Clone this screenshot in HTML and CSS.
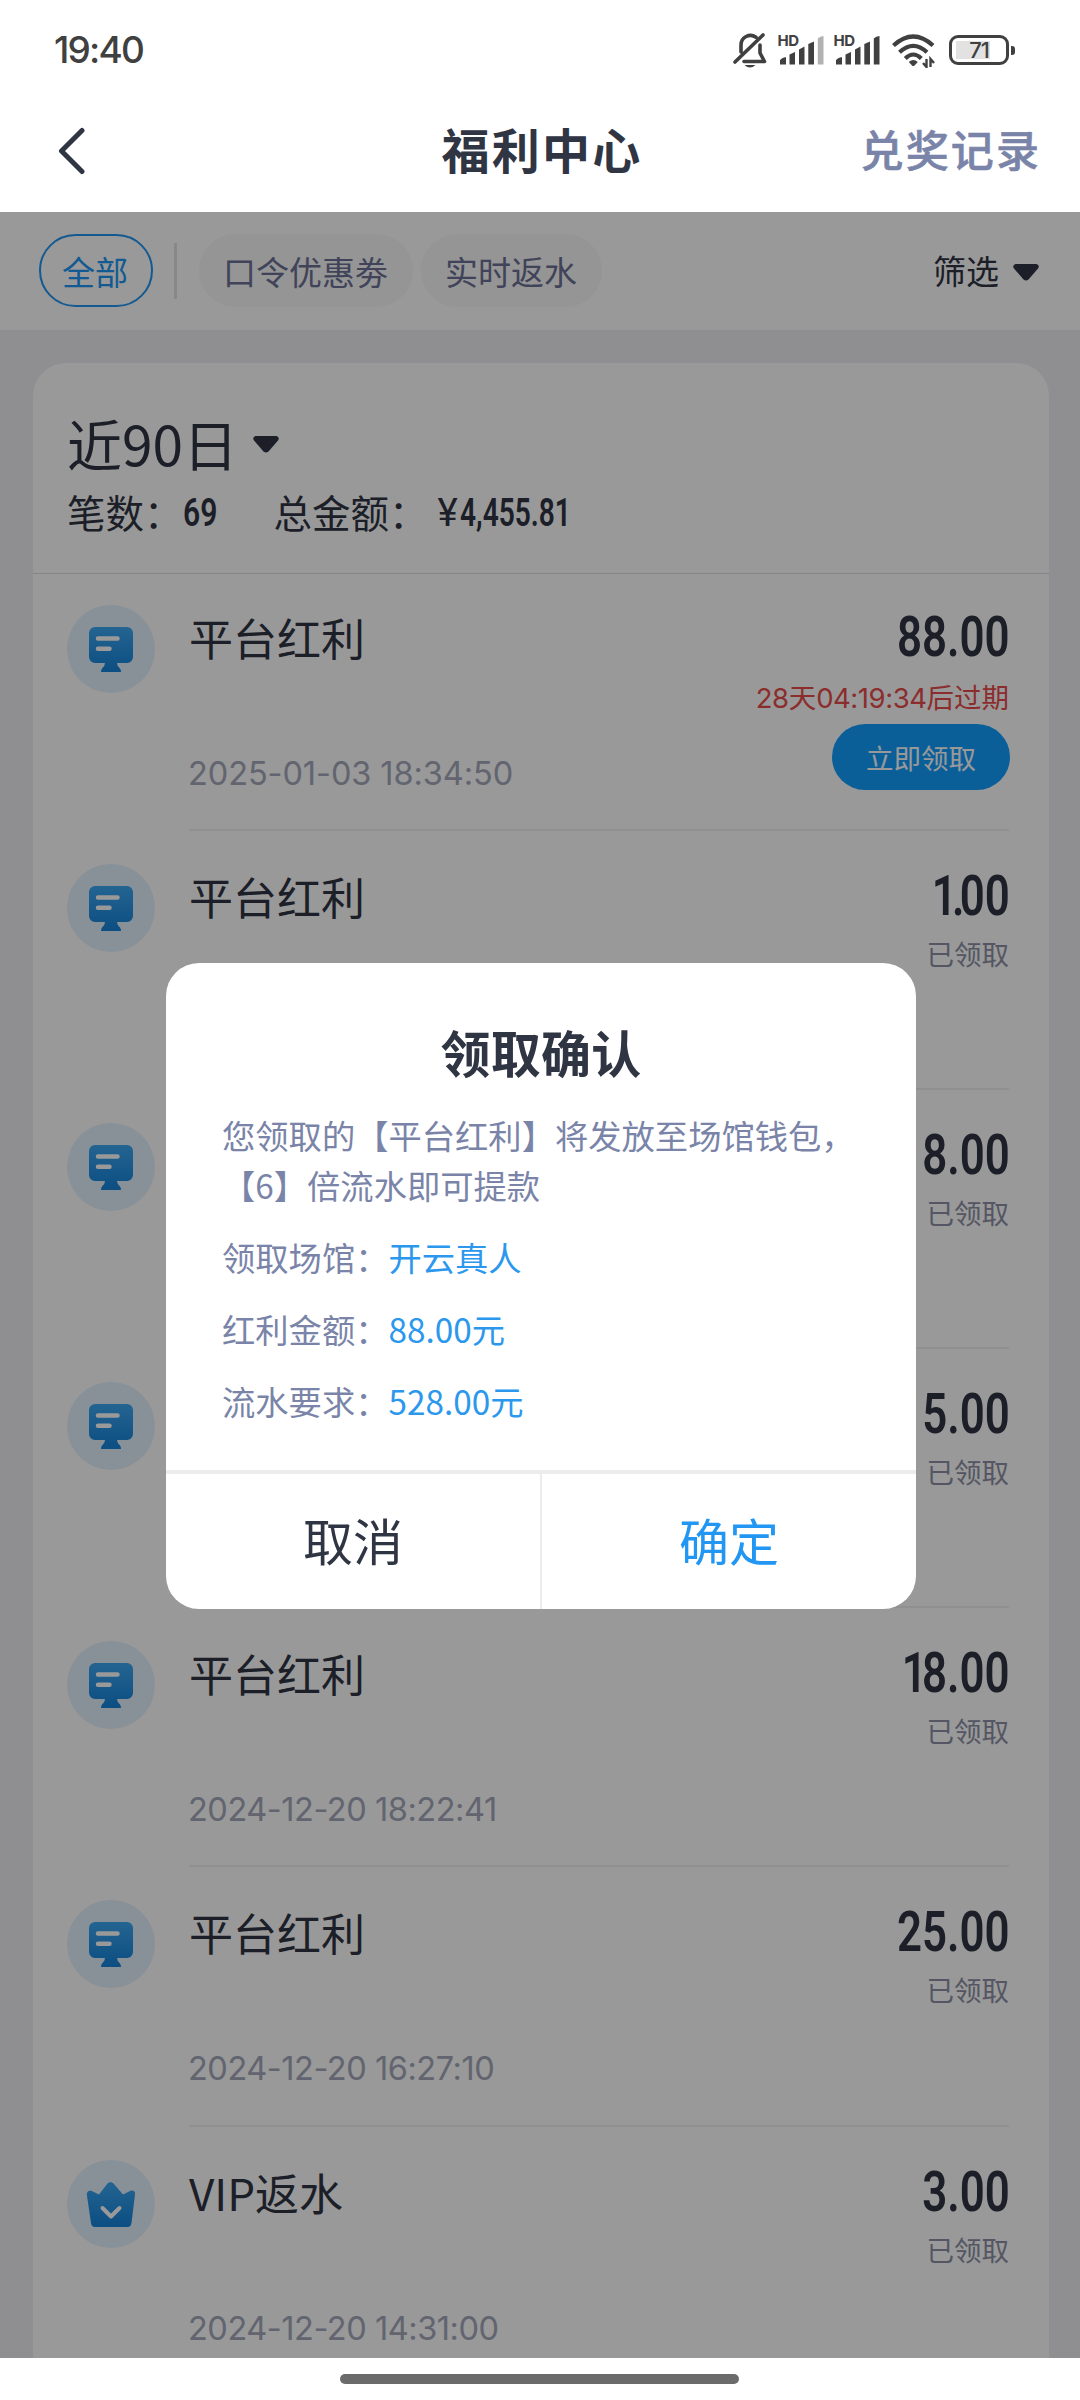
FILE: index.html
```html
<!DOCTYPE html>
<html lang="zh-CN">
<head>
<meta charset="utf-8">
<title>福利中心</title>
<link rel="stylesheet" href="styles.css">
</head>
<body>
<svg class="defs" width="0" height="0" aria-hidden="true">
  <defs>
    <linearGradient id="blue" x1="0" y1="0" x2="0" y2="1">
      <stop offset="0" stop-color="#3ba7f2"/>
      <stop offset="1" stop-color="#1682da"/>
    </linearGradient>
    <symbol id="monitor" viewBox="0 0 88 88">
      <path fill="url(#blue)" d="M28 22H60a6 6 0 0 1 6 6V52a6 6 0 0 1-6 6H50q0 3 3 5.500q1 1 1 3.500H34q0-2.500 1-3.500q3-2.500 3-5.500H28a6 6 0 0 1-6-6V28a6 6 0 0 1 6-6z"/>
      <path stroke="#fff" stroke-width="4.500" stroke-linecap="round" d="M31 33.500H50.500M31 43.700H42.500"/>
    </symbol>
    <symbol id="crown" viewBox="0 0 88 88">
      <path fill="url(#blue)" d="M40.500 23.500q3-3 6 0L56 34.500L63.500 30.800q5-1 4.500 3.700L64.500 63q-.6 4-4 4H28q-3.500 0-4-4L19.800 34.500q0-4.500 4.500-3.700L32 34.500z"/>
      <path fill="none" stroke="#fff" stroke-width="4" stroke-linecap="round" stroke-linejoin="round" d="M35.500 48l8.500 8.500l8.500-8.500"/>
    </symbol>
    <symbol id="caret" viewBox="0 0 26 17">
      <path d="M2.500 0H23.500Q27 1.500 25 4.500L15.500 15.500Q13 17.500 10.500 15.500L1 4.500Q-1 1.500 2.500 0z"/>
    </symbol>
  </defs>
</svg>
<div class="screen">
  <div class="status">
    <span class="clock">19:40</span>
    <div class="status-icons">
      <svg class="bell" viewBox="0 0 34 36" fill="none" stroke="#404040" stroke-width="3.600" stroke-linecap="round" stroke-linejoin="round">
        <path d="M8 20V13A9.500 9.500 0 0 1 23 5.200M27 13V21L31.500 29.500H11M30 3L2 30"/>
        <path stroke="none" fill="#404040" d="M11.500 33H22.500Q17 38 11.500 33z"/>
      </svg>
      <svg class="signal" viewBox="0 0 46 32">
        <text x="-.5" y="12">HD</text>
        <path d="M2 30.500V26Q4 23.500 8 23V30.500zM11.500 30.500V20.500L17 18V30.500zM21 30.500V15.500L26.500 12.500V30.500zM30.300 30.500V10L36 7.500V30.500z"/>
        <path class="faint" d="M39.800 30.500V4.500Q42 2 45.500 2V30.500z"/>
      </svg>
      <svg class="signal second" viewBox="0 0 46 32">
        <text x="-.5" y="12">HD</text>
        <path d="M2 30.500V26Q4 23.500 8 23V30.500zM11.500 30.500V20.500L17 18V30.500zM21 30.500V15.500L26.500 12.500V30.500zM30.300 30.500V10L36 7.500V30.500zM39.800 30.500V4.500Q42 2 45.500 2V30.500z"/>
      </svg>
      <svg class="wifi" viewBox="0 0 43 34" fill="none" stroke="#404040" stroke-width="4.200">
        <path d="M1.500 11.500Q21.300-6.500 41 11.500M7.500 18.300Q21.300 5.500 35 18.300M13.300 24.500Q21.300 16.500 29.300 24.500"/>
        <path fill="#404040" stroke="none" d="M16.800 28Q21.300 24 25.800 28L22.500 31.500Q21.300 32.500 20 31.500z"/>
        <path stroke-width="2.400" d="M34.500 25V33L31 29M38.500 33V25L42 29"/>
      </svg>
      <div class="battery"><span>71</span></div>
    </div>
  </div>
  <header class="navbar">
    <svg class="back" viewBox="0 0 28 50"><path d="M24 4.500L3.500 25L24 45.500"/></svg>
    <h1>福利中心</h1>
    <a class="records">兑奖记录</a>
  </header>
  <main>
    <nav class="filters">
      <span class="chip active">全部</span>
      <i class="sep"></i>
      <span class="chip">口令优惠劵</span>
      <span class="chip">实时返水</span>
      <span class="filter">筛选<svg class="caret"><use href="#caret"/></svg></span>
    </nav>
    <section class="card">
      <div class="summary">
        <div class="period">近90日<svg class="caret"><use href="#caret"/></svg></div>
        <div class="totals">
          <span class="count">笔数：</span><b class="din n1">69</b>
          <span class="total">总金额：</span><span class="yen">¥</span><b class="din n2">4,455.81</b>
        </div>
      </div>
      <ul class="list">
        <li>
          <svg class="badge"><use href="#monitor"/></svg>
          <div class="body">
            <div class="info"><h2>平台红利</h2><time>2025-01-03 18:34:50</time></div>
            <div class="side"><b class="din amount">88.00</b><span class="expire"><i>28</i>天<i>04:19:34</i>后过期</span><span class="claim">立即领取</span></div>
          </div>
        </li>
        <li>
          <svg class="badge"><use href="#monitor"/></svg>
          <div class="body">
            <div class="info"><h2>平台红利</h2></div>
            <div class="side"><b class="din amount lead-one">1.00</b><span class="state">已领取</span></div>
          </div>
        </li>
        <li>
          <svg class="badge"><use href="#monitor"/></svg>
          <div class="body">
            <div class="info"></div>
            <div class="side"><b class="din amount">8.00</b><span class="state">已领取</span></div>
          </div>
        </li>
        <li>
          <svg class="badge"><use href="#monitor"/></svg>
          <div class="body">
            <div class="info"></div>
            <div class="side"><b class="din amount">5.00</b><span class="state">已领取</span></div>
          </div>
        </li>
        <li>
          <svg class="badge"><use href="#monitor"/></svg>
          <div class="body">
            <div class="info"><h2>平台红利</h2><time>2024-12-20 18:22:41</time></div>
            <div class="side"><b class="din amount lead-one">18.00</b><span class="state">已领取</span></div>
          </div>
        </li>
        <li>
          <svg class="badge"><use href="#monitor"/></svg>
          <div class="body">
            <div class="info"><h2>平台红利</h2><time>2024-12-20 16:27:10</time></div>
            <div class="side"><b class="din amount">25.00</b><span class="state">已领取</span></div>
          </div>
        </li>
        <li>
          <svg class="badge"><use href="#crown"/></svg>
          <div class="body">
            <div class="info"><h2>VIP返水</h2><time>2024-12-20 14:31:00</time></div>
            <div class="side"><b class="din amount">3.00</b><span class="state">已领取</span></div>
          </div>
        </li>
      </ul>
    </section>
    <div class="overlay">
      <div class="dialog">
        <div class="dialog-body">
          <h3>领取确认</h3>
          <p>您领取的【平台红利】将发放至场馆钱包，<br>【6】倍流水即可提款</p>
          <dl>
            <div><dt>领取场馆：</dt><dd>开云真人</dd></div>
            <div><dt>红利金额：</dt><dd>88.00元</dd></div>
            <div><dt>流水要求：</dt><dd>528.00元</dd></div>
          </dl>
        </div>
        <div class="actions"><span class="cancel">取消</span><span class="ok">确定</span></div>
      </div>
    </div>
  </main>
  <footer class="home"><i></i></footer>
</div>
</body>
</html>
```
FILE: styles.css
```css
* { box-sizing: border-box; margin: 0; padding: 0; }
body {
  width: 1080px;
  height: 2400px;
  overflow: hidden;
  background: #fff;
  font-family: "Noto Sans CJK SC", sans-serif;
  color: #303543;
}
i { font-style: normal; }
.defs { display: block; position: absolute; }
.screen { display: flex; flex-direction: column; height: 2400px; }

/* Status bar */
.status {
  display: flex;
  justify-content: space-between;
  height: 98px;
  padding: 0 71px 0 54px;
}
.clock { font: 500 37px/98px Inter, sans-serif; color: #404040; letter-spacing: -1.800px; padding-top: 1px; }
.status-icons { display: flex; align-items: flex-start; padding-top: 32px; }
.bell { width: 34px; height: 36px; margin-right: 11px; }
.signal { width: 46px; height: 32px; margin: 2px 10px 0 0; fill: #404040; overflow: visible; }
.signal.second { margin-right: 12px; }
.signal text { font: 700 15px Inter, sans-serif; letter-spacing: -.5px; }
.signal .faint { fill: #b2b2b2; }
.wifi { width: 43px; height: 34px; margin: 2px 14px 0 0; }
.battery {
  position: relative;
  width: 60px;
  height: 30px;
  margin-top: 3px;
  border: 3px solid #404040;
  border-radius: 9px;
  background: linear-gradient(#e2e2e2, #e2e2e2) 4px 3px / 34px 18px no-repeat;
  font: 500 22px/24px Inter, sans-serif;
  text-align: center;
  color: #404040;
}
.battery span { letter-spacing: -1px; }
.battery::after {
  content: "";
  position: absolute;
  right: -9px;
  top: 8px;
  width: 4px;
  height: 9px;
  border-radius: 0 3px 3px 0;
  background: #404040;
}

/* Navigation bar */
.navbar {
  display: grid;
  grid-template-columns: 300px 1fr 300px;
  align-items: start;
  height: 114px;
  padding: 0 39px 0 58px;
}
.back { width: 28px; height: 50px; margin-top: 28px; fill: none; stroke: #303543; stroke-width: 5; stroke-linecap: round; stroke-linejoin: round; }
h1 { font-size: 48px; line-height: 100px; font-weight: 700; letter-spacing: 2.300px; text-align: center; padding-right: 15px; }
.records { font-size: 43px; line-height: 100px; font-weight: 500; letter-spacing: 2.100px; text-align: right; color: #7a84a8; -webkit-text-stroke: .600px #7a84a8; }

main { position: relative; height: 2146px; overflow: hidden; background: #eeeff4; }

/* Filters */
.filters {
  display: flex;
  align-items: center;
  height: 118px;
  padding: 0 41px 1px 39px;
  background: #fff;
  font-size: 33px;
  line-height: 75px;
}
.chip { height: 73px; padding: 0 25px 0 24px; border-radius: 37px; background: #f8f8f8; color: #6b7194; margin-right: 8px; }
.chip.active { padding: 0 23px 0 21px; border: 2px solid #2196f3; background: none; color: #2196f3; line-height: 71px; margin-right: 21px; }
.sep { width: 3px; height: 56px; margin-right: 22px; background: #e3e3ea; }
.filter { display: flex; align-items: center; margin-left: auto; }
.caret { width: 26px; height: 17px; fill: #303543; margin: 3px 0 0 14px; }

/* Card */
.card { margin: 33px 31px 0 33px; border-radius: 33px 33px 0 0; background: #fff; }
.summary { height: 211px; padding: 40px 34px 0; border-bottom: 1px solid #dcdce4; color: #303543; }
.period { display: flex; align-items: center; height: 78px; font-size: 55px; line-height: 77px; }
.period .caret { margin: 4px 0 0 15px; }
.totals { display: flex; height: 60px; font-size: 38.500px; line-height: 60px; }
.din { display: block; font-family: Roboto, sans-serif; font-weight: 600; transform: scaleX(.78); transform-origin: 0 50%; }
.totals .din, .yen { padding-top: 2px; }
.n1 { width: 91px; }
.n2 { transform: scaleX(.73); }
.yen { font-family: Roboto, sans-serif; width: 22px; margin-left: 10px; }

/* Rows */
.list { list-style: none; margin-top: -2px; }
.list li { display: flex; height: 259.100px; padding: 0 40px 0 34px; }
.badge { flex: none; width: 88px; height: 88px; margin: 33px 34px 0 0; border-radius: 50%; background: #e4f2fe; }
.body { flex: 1; display: flex; justify-content: space-between; border-bottom: 2px solid #f0f0f3; }
.info { display: flex; flex-direction: column; }
h2 { font-size: 44px; line-height: 64px; font-weight: 400; margin: 33px 0 0; }
time { font: 400 32.500px/40px Inter, sans-serif; color: #a4a8ba; margin: 85px 0 0 -1px; letter-spacing: -.450px; }
li:first-child time { letter-spacing: -.080px; }
.side { display: flex; flex-direction: column; align-items: flex-end; }
.amount { font-size: 55.500px; line-height: 64px; margin: 34px -1px 0 0; transform: scaleX(.79); transform-origin: 100% 50%; }
.lead-one::first-letter { letter-spacing: -6px; }
.state, .expire { font-size: 27.500px; line-height: 36px; margin-top: 6px; color: #8d90a6; }
.expire { color: #ea4b4b; margin-top: 8px; }
.expire i { font-family: Inter, sans-serif; letter-spacing: -.450px; }
.claim { width: 178px; height: 66px; border-radius: 33px; margin: 8px -1px 0 0; background: #129eff; color: #fff; font-size: 27.500px; line-height: 66px; text-align: center; }

/* Dialog */
.overlay { position: absolute; inset: 0; display: flex; align-items: center; justify-content: center; background: rgba(0, 0, 0, .4); }
.dialog { width: 750px; height: 646px; margin: 2px 0 0 2px; border-radius: 33px; background: #fff; overflow: hidden; }
.dialog-body { height: 507px; padding: 48px 56px 0; }
h3 { font-size: 50px; line-height: 80px; font-weight: 700; text-align: center; letter-spacing: .200px; }
p { font-size: 33.300px; line-height: 50px; color: #7a84a8; white-space: nowrap; margin-top: 19px; }
dl { font-size: 33.300px; line-height: 50px; margin-top: 22px; }
dl div { display: flex; height: 72px; }
dt { color: #7a84a8; }
dd { color: #2b98ee; }
.actions { display: flex; height: 139px; border-top: 4px solid #ececec; font-size: 50px; line-height: 130px; text-align: center; }
.actions span { flex: 1; }
.cancel { border-right: 2px solid #ececec; }
.ok { color: #2196f3; }

/* Home indicator */
.home { display: flex; justify-content: center; height: 42px; padding: 16px 1px 0 0; }
.home i { width: 399px; height: 10px; border-radius: 5px; background: #6b6b6b; }
```
